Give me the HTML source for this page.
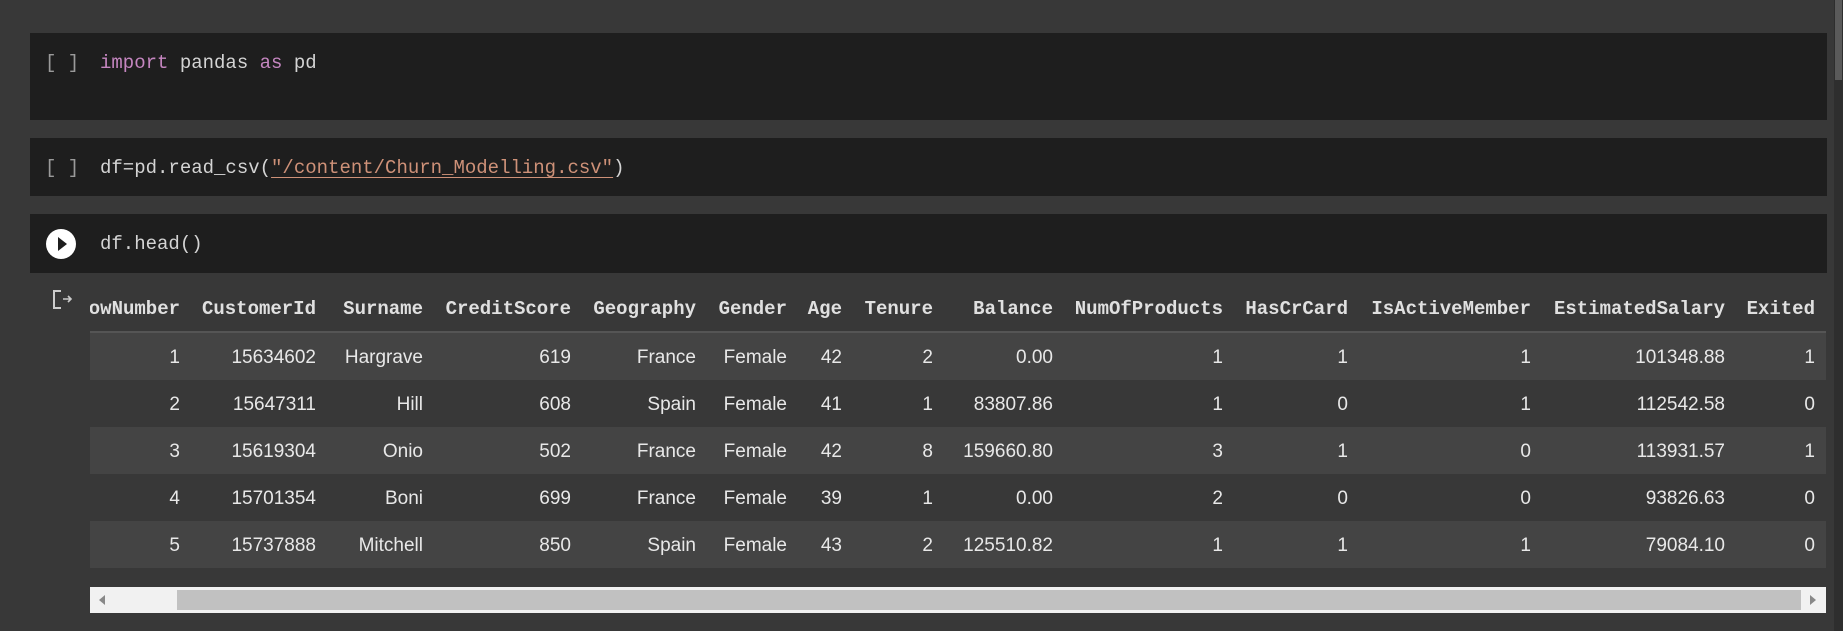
<!DOCTYPE html>
<html><head><meta charset="utf-8"><style>
html,body{margin:0;padding:0}
body{width:1843px;height:631px;background:#383838;position:relative;overflow:hidden;font-family:"Liberation Sans",sans-serif}
.cell{position:absolute;left:30px;width:1797px;background:#1e1e1e}
.code{position:absolute;left:100px;font-family:"Liberation Mono",monospace;font-size:19px;color:#d4d4d4;white-space:pre;line-height:22px}
.br{position:absolute;left:45px;font-family:"Liberation Mono",monospace;font-size:19px;color:#9a9a9a;line-height:22px;white-space:pre}
.kw{color:#c586c0}.st{color:#ce9178;text-decoration:underline;text-underline-offset:4px}
.t{position:absolute;white-space:nowrap;line-height:22px}
.h{font-family:"Liberation Mono",monospace;font-weight:bold;font-size:19px;color:#e0e0e0}
.v{font-size:19px;color:#e8e8e8}
.row{position:absolute;left:90px;width:1736px;height:47px}
</style></head><body>
<div class="cell" style="top:33px;height:87px"></div>
<div class="br" style="top:52px">[ ]</div>
<div class="code" style="top:52px"><span class="kw">import</span> pandas <span class="kw">as</span> pd</div>
<div class="cell" style="top:138px;height:58px"></div>
<div class="br" style="top:157px">[ ]</div>
<div class="code" style="top:157px">df=pd.read_csv(<span class="st">"/content/Churn_Modelling.csv"</span>)</div>
<div class="cell" style="top:214px;height:59px"></div>
<div style="position:absolute;left:46px;top:229px;width:30px;height:30px;border-radius:50%;background:#fff"></div>
<div style="position:absolute;left:58px;top:237px;width:0;height:0;border-left:9px solid #1e1e1e;border-top:7px solid transparent;border-bottom:7px solid transparent"></div>
<div class="code" style="top:233px">df.head()</div>
<div style="position:absolute;left:90px;top:331px;width:1736px;height:2px;background:#555"></div>
<div class="row" style="top:333px;background:#444"></div>
<div class="row" style="top:380px;background:#383838"></div>
<div class="row" style="top:427px;background:#444"></div>
<div class="row" style="top:474px;background:#383838"></div>
<div class="row" style="top:521px;background:#444"></div>
<div style="position:absolute;left:0;top:280px;width:90px;height:300px;background:#383838;z-index:2"></div>
<svg style="position:absolute;left:51px;top:288px;z-index:3" width="24" height="24" viewBox="0 0 24 24"><path d="M10 3H3v17h7" fill="none" stroke="#ccc" stroke-width="2"/><path d="M12 11h8M17 8l3 3-3 3" fill="none" stroke="#ccc" stroke-width="1.6"/></svg>
<div id="tbl"></div>
<div style="position:absolute;left:90px;top:587px;width:1736px;height:26px;background:#f1f1f1"></div>
<div style="position:absolute;left:177px;top:590px;width:1624px;height:20px;background:#c1c1c1"></div>
<div style="position:absolute;left:99px;top:595px;width:0;height:0;border-right:6px solid #888;border-top:5px solid transparent;border-bottom:5px solid transparent"></div>
<div style="position:absolute;left:1810px;top:595px;width:0;height:0;border-left:6px solid #888;border-top:5px solid transparent;border-bottom:5px solid transparent"></div>
<div style="position:absolute;left:1834px;top:0;width:9px;height:631px;background:#2e2e2e"></div>
<div style="position:absolute;left:1835px;top:0;width:7px;height:80px;background:#5a5a5a"></div>
<script>
var R=[180,316,423,571,696,787,842,933,1053,1223,1348,1531,1725,1815];
var H=["RowNumber","CustomerId","Surname","CreditScore","Geography","Gender","Age","Tenure","Balance","NumOfProducts","HasCrCard","IsActiveMember","EstimatedSalary","Exited"];
var D=[["1","15634602","Hargrave","619","France","Female","42","2","0.00","1","1","1","101348.88","1"],
["2","15647311","Hill","608","Spain","Female","41","1","83807.86","1","0","1","112542.58","0"],
["3","15619304","Onio","502","France","Female","42","8","159660.80","3","1","0","113931.57","1"],
["4","15701354","Boni","699","France","Female","39","1","0.00","2","0","0","93826.63","0"],
["5","15737888","Mitchell","850","Spain","Female","43","2","125510.82","1","1","1","79084.10","0"]];
var s="";
for(var i=0;i<14;i++){s+='<div class="t h" style="right:'+(1843-R[i])+'px;top:298px">'+H[i]+'</div>';}
for(var r=0;r<5;r++)for(var i=0;i<14;i++){s+='<div class="t v" style="right:'+(1843-R[i])+'px;top:'+(347+47*r)+'px">'+D[r][i]+'</div>';}
document.getElementById('tbl').innerHTML=s;
</script>
</body></html>
